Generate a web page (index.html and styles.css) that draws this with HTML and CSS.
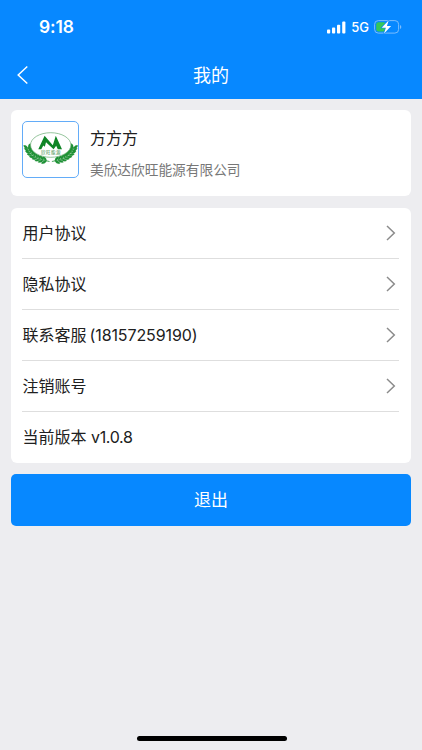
FILE: index.html
```
<!DOCTYPE html>
<html lang="zh-CN">
<head>
<meta charset="utf-8">
<title>我的</title>
<link rel="stylesheet" href="styles.css">
</head>
<body>
<div class="screen">
  <header class="header">
    <div class="status">
      <span class="time">9:18</span>
      <div class="indicators">
        <svg class="signal" width="19" height="13" viewBox="0 0 19 13" fill="#fff"><rect x="0" y="8.5" width="3.2" height="4" rx=".9"/><rect x="5" y="6.5" width="3.2" height="6" rx=".9"/><rect x="10" y="3.7" width="3.2" height="8.8" rx=".9"/><rect x="15.2" y=".5" width="3.2" height="12" rx=".9"/></svg>
        <span class="network">5G</span>
        <svg class="battery" width="28" height="14" viewBox="0 0 28 14"><rect x=".6" y=".6" width="24" height="12.5" rx="3.7" fill="none" stroke="#7cbdfd" stroke-width="1"/><path d="M26 5v4q1.3-.6 1.3-2T26 5z" fill="#7cbdfd"/><rect x="2.2" y="2.2" width="9.5" height="9.3" rx="2.2" fill="#35c759"/><path d="M14.8.3 7.7 7.7h4.2l-2 6 7.2-7.6h-4.2z" fill="#fff" stroke="#0788ff" stroke-width="1.2" paint-order="stroke"/></svg>
      </div>
    </div>
    <nav class="nav">
      <svg class="back" width="12" height="20" viewBox="0 0 12 20"><path d="M10.3 1.5 1.2 10l9.1 8.5" fill="none" stroke="#fff" stroke-width="1.5"/></svg>
      <h1>我的</h1>
    </nav>
  </header>
  <main>
    <section class="card profile">
      <div class="avatar">
        <svg width="55" height="55" viewBox="0 0 55 55">
          <defs>
            <g id="leaf" fill="#1f9136"><path d="M0 0Q.6-3.6 4.4-3.6 4.6-.6 0 0zM0 0Q.6 3.6 4.4 3.6 4.6.6 0 0z" stroke="#1f9136" stroke-width=".25"/></g>
            <g id="branch">
              <path d="M4.8 25Q8 37 26.5 39.5" fill="none" stroke="#1f9136" stroke-width=".8"/>
              <use href="#leaf" transform="translate(5.2 26.8) rotate(-105)"/>
              <use href="#leaf" transform="translate(6.2 29) rotate(-114)"/>
              <use href="#leaf" transform="translate(7.7 31.1) rotate(-123)"/>
              <use href="#leaf" transform="translate(9.6 33) rotate(-132)"/>
              <use href="#leaf" transform="translate(11.9 34.7) rotate(-141)"/>
              <use href="#leaf" transform="translate(14.5 36.1) rotate(-149)"/>
              <use href="#leaf" transform="translate(17.3 37.3) rotate(-156)"/>
              <use href="#leaf" transform="translate(20.3 38.2) rotate(-162)"/>
              <use href="#leaf" transform="translate(23.5 38.9) rotate(-168)"/>
            </g>
          </defs>
          <use href="#branch"/>
          <use href="#branch" transform="translate(55.4 0) scale(-1 1)"/>
          <ellipse cx="27.7" cy="23" rx="20.2" ry="12.3" fill="#fff" stroke="#68ac72" stroke-width=".7"/>
          <path d="M15.3 27.3 21.6 13.8l8.2 9.4 3-9.4 6.2 13.5h-4.2l-1.6-3.6-2.6 3.6L23 20.2l-1.2 4.6-1.5-1.4-2 3.9z" fill="#0f8526"/>
          <text x="27.9" y="32.4" class="logo-text" text-anchor="middle">欣旺能源</text>
        </svg>
      </div>
      <div class="identity">
        <div class="name">方方方</div>
        <div class="company">美欣达欣旺能源有限公司</div>
      </div>
    </section>
    <section class="card menu">
      <div class="row"><span>用户协议</span><svg class="arrow" viewBox="0 0 10 16"><path d="m1 1 7.3 7L1 15"/></svg></div>
      <div class="row"><span>隐私协议</span><svg class="arrow" viewBox="0 0 10 16"><path d="m1 1 7.3 7L1 15"/></svg></div>
      <div class="row"><span>联系客服<span class="phone">(18157259190)</span></span><svg class="arrow" viewBox="0 0 10 16"><path d="m1 1 7.3 7L1 15"/></svg></div>
      <div class="row"><span>注销账号</span><svg class="arrow" viewBox="0 0 10 16"><path d="m1 1 7.3 7L1 15"/></svg></div>
      <div class="row"><span>当前版本<span class="version">v1.0.8</span></span></div>
    </section>
    <button class="logout">退出</button>
  </main>
  <div class="home-bar"></div>
</div>
</body>
</html>
```
FILE: styles.css
```
* { box-sizing: border-box; }
body { margin: 0; background: #ededf0; }
.screen {
  width: 422px;
  height: 750px;
  display: flex;
  flex-direction: column;
  overflow: hidden;
  font-family: Inter, "Noto Sans CJK SC", sans-serif;
  color: #202020;
}
.header { height: 98.5px; background: #0788ff; color: #fff; }
.status {
  height: 50px;
  padding: 4px 20px 0 39px;
  display: flex;
  align-items: center;
  justify-content: space-between;
}
.time { font-size: 17.4px; font-weight: 600; line-height: 24px; letter-spacing: -.1px; }
.indicators { display: flex; align-items: center; }
.network { margin: 0 5px; font-size: 13px; font-weight: 500; }
.nav { height: 48px; display: grid; grid-template-columns: 48px 1fr 48px; align-items: center; }
.back { margin: 2px 0 0 17px; }
.nav h1 { margin: 3px 0 0; font-size: 18px; line-height: 26px; font-weight: 400; text-align: center; }
main { flex: 1; padding: 11.5px 11.5px 0 11.4px; }
.card { background: #fff; border-radius: 6px; }
.profile { height: 86px; padding: 11px; display: flex; }
.avatar { width: 57px; height: 57px; border: 1px solid #63acf8; border-radius: 5px; overflow: hidden; }
.avatar svg { display: block; }
.logo-text { font-size: 4.5px; letter-spacing: .5px; fill: #398d47; }
.identity { margin-left: 10.6px; padding-top: 5px; }
.name { font-size: 16px; line-height: 24px; }
.company { margin-top: 10px; font-size: 13.7px; line-height: 20px; color: #777; }
.menu { margin-top: 11.5px; height: 255px; padding: 0 11.5px 0 11.1px; }
.row {
  height: 51px;
  display: flex;
  align-items: center;
  justify-content: space-between;
  border-bottom: 1px solid #dedede;
  font-size: 16px;
  line-height: 24px;
}
.row:last-child { border: 0; }
.phone { margin-left: 3px; letter-spacing: -.1px; }
.version { margin-left: 4.5px; letter-spacing: -.35px; }
.arrow { width: 10px; height: 16px; margin-right: 3.4px; fill: none; stroke: #8b8b8b; stroke-width: 1.5; }
.logout {
  display: block;
  width: 100%;
  height: 51.5px;
  margin-top: 11.5px;
  padding: 0;
  border: 0;
  border-radius: 5px;
  background: #0788ff;
  color: #fff;
  font: 400 17px/24px Inter, "Noto Sans CJK SC", sans-serif;
}
.home-bar { width: 150px; height: 5px; margin: 0 0 9px 137px; border-radius: 3px; background: #000; }
```
